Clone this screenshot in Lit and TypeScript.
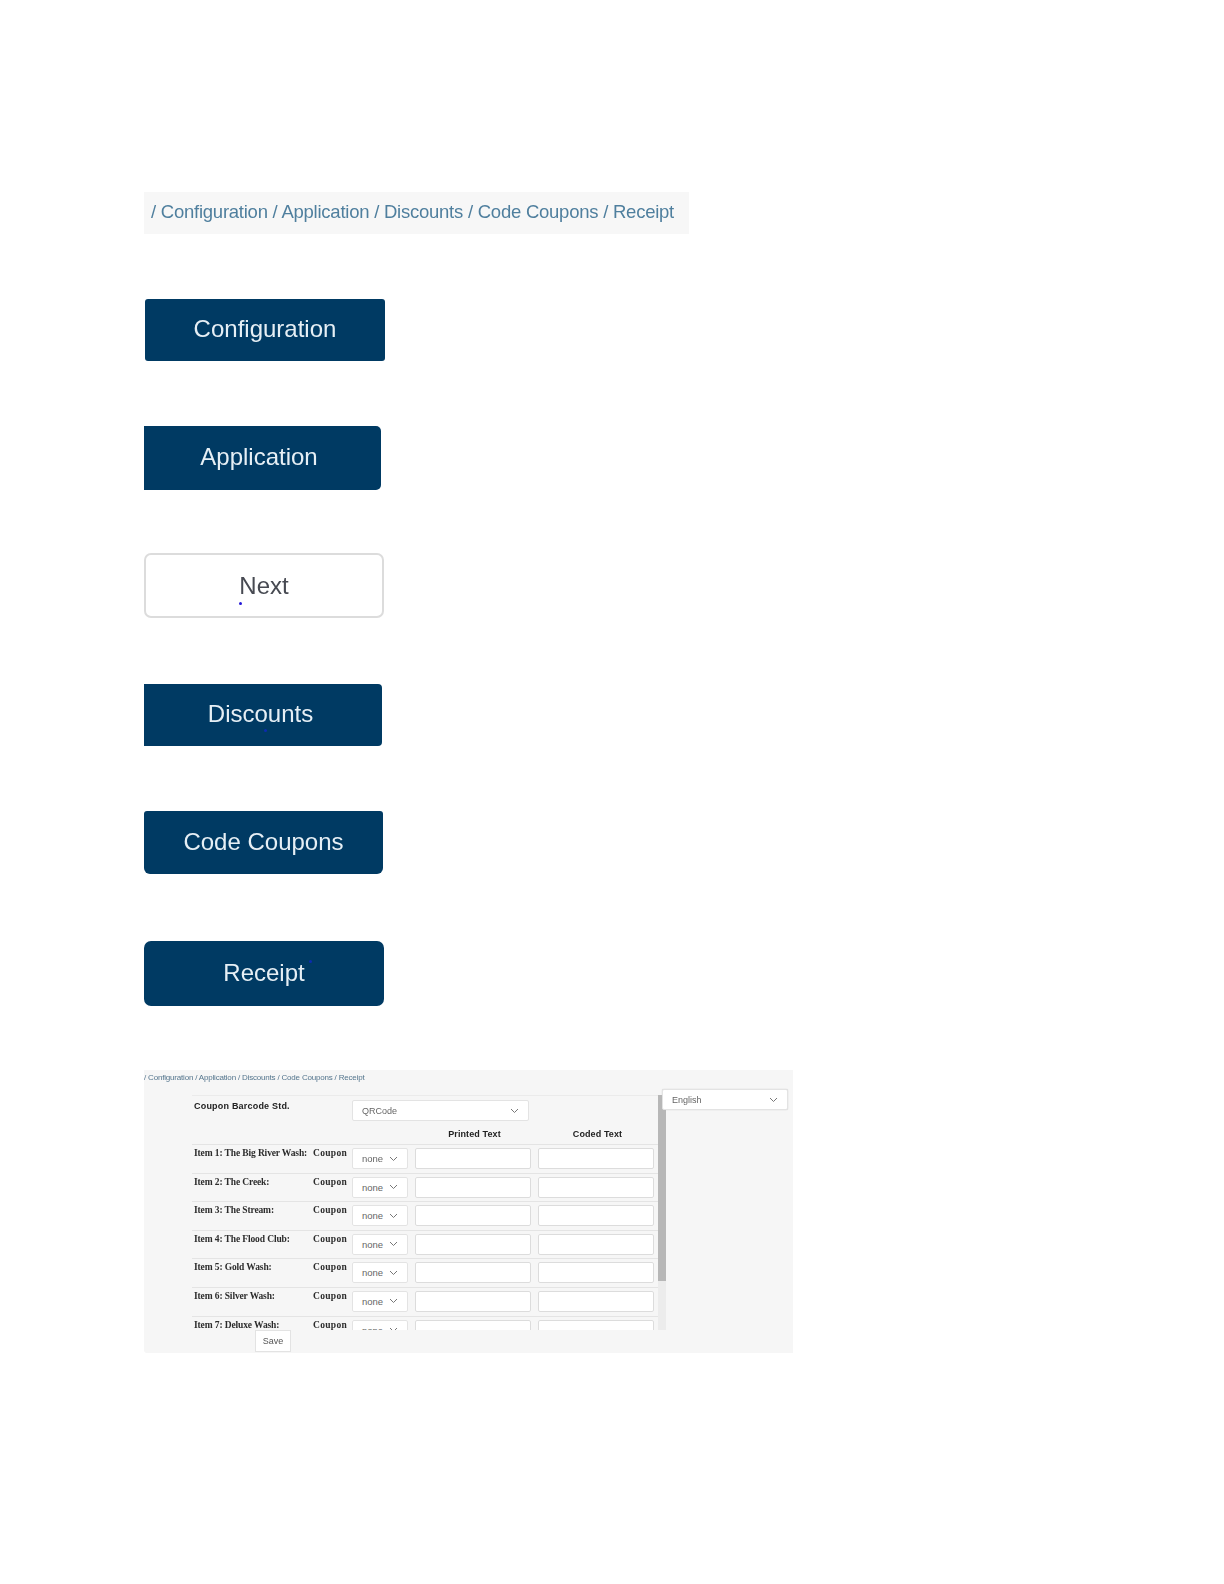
import { LitElement, html, css, svg } from "lit";
import { customElement } from "lit/decorators.js";

const items = [
  "Item 1: The Big River Wash:",
  "Item 2: The Creek:",
  "Item 3: The Stream:",
  "Item 4: The Flood Club:",
  "Item 5: Gold Wash:",
  "Item 6: Silver Wash:",
  "Item 7: Deluxe Wash:",
];

const chevron = svg`<svg class="chev" width="9" height="6" viewBox="0 0 9 6" fill="none" stroke="#777" stroke-width="1"><path d="M1 1l3.5 3.5L8 1"/></svg>`;

@customElement("app-root")
export class AppRoot extends LitElement {
  static styles = css`
    :host {
      display: block;
      box-sizing: border-box;
      height: 1584px;
      padding: 192px 0 0 144px;
      background: #fff;
      font-family: "Liberation Sans", Arial, sans-serif;
    }
    .trail {
      width: 545px;
      height: 42px;
      box-sizing: border-box;
      padding: 0 0 3px 7px;
      display: flex;
      align-items: center;
      background: #f7f7f7;
      color: #4f7f9e;
      font-size: 18.5px;
      letter-spacing: -0.24px;
      white-space: nowrap;
      filter: blur(0.4px);
    }
    .stack {
      display: flex;
      flex-direction: column;
      align-items: flex-start;
    }
    .btn {
      position: relative;
      display: flex;
      align-items: center;
      justify-content: center;
      box-sizing: border-box;
      padding: 0 0 2px;
      border: 0;
      font: 24px "Liberation Sans", Arial, sans-serif;
      background: #003a63;
      color: #e6eff5;
      filter: blur(0.4px);
    }
    .config { width: 240px; height: 62px; margin: 65px 0 0 1px; border-radius: 3px; }
    .app { width: 237px; height: 64px; margin-top: 65px; padding-right: 7px; border-radius: 0 5px 5px 0; }
    .next {
      width: 240px;
      height: 65px;
      margin-top: 63px;
      padding-bottom: 0;
      border-radius: 7px;
      background: #fff;
      color: #474a52;
      border: 2px solid #dcdcdc;
    }
    .disc { width: 238px; height: 62px; margin-top: 66px; padding-right: 5px; border-radius: 0 4px 4px 0; }
    .code { width: 239px; height: 63px; margin-top: 65px; border-radius: 3px 3px 6px 6px; }
    .rcpt { width: 240px; height: 65px; margin-top: 67px; border-radius: 7px; }
    .dot {
      position: absolute;
      width: 3px;
      height: 3px;
      border-radius: 50%;
      background: #2418d8;
    }
    .next .dot { left: 93px; top: 47px; }
    .disc .dot { left: 120px; top: 45px; background: #0b2bb0; }
    .rcpt .dot { left: 165px; top: 19px; background: #0b2bb0; }

    .shot {
      width: 649px;
      height: 283px;
      margin-top: 64px;
      background: #f6f6f6;
      color: #333;
      overflow: hidden;
      border-radius: 0 0 0 3px;
      filter: blur(0.45px);
    }
    .crumbs {
      height: 19px;
      box-sizing: border-box;
      padding-top: 3px;
      font-size: 8px;
      line-height: 9px;
      letter-spacing: -0.19px;
      color: #54758d;
      white-space: nowrap;
    }
    .body {
      display: flex;
      align-items: flex-start;
      padding-left: 48px;
    }
    .form { margin-top: 6px; width: 474px; }
    .pane { display: flex; height: 235px; }
    .scroll {
      width: 466px;
      height: 235px;
      overflow: hidden;
      border-top: 1px solid #ebebeb;
      box-sizing: border-box;
    }
    .grid {
      display: grid;
      grid-template-columns: 153px 56px 116px 116px;
      column-gap: 7px;
    }
    .barcode { height: 32px; padding-top: 4px; box-sizing: border-box; }
    .barcode-label {
      padding: 1px 0 0 2px;
      font-size: 9px;
      font-weight: 700;
      letter-spacing: 0.2px;
      color: #222;
      white-space: nowrap;
    }
    .barcode .sel { grid-column: 2 / span 2; width: 177px; }
    .heads {
      height: 12px;
      margin-bottom: 4px;
      align-items: center;
      font-size: 9px;
      font-weight: 700;
      color: #222;
      letter-spacing: 0.1px;
      text-align: center;
    }
    .heads span { padding-left: 3px; }
    .heads .h1 { grid-column: 3; }
    .row {
      height: 28.6px;
      box-sizing: border-box;
      padding-top: 3px;
      border-top: 1px solid #e4e4e4;
    }
    .label {
      position: relative;
      padding: 0 0 0 2px;
      font: 700 9.5px "Liberation Serif", serif;
      letter-spacing: -0.12px;
      color: #2c2c2c;
      white-space: nowrap;
    }
    .coupon {
      position: absolute;
      left: 121px;
      top: 0;
      letter-spacing: 0.3px;
    }
    .sel {
      display: flex;
      align-items: center;
      justify-content: space-between;
      box-sizing: border-box;
      height: 21px;
      padding: 0 9px 0 9px;
      background: #fff;
      border: 1px solid #e3e3e3;
      border-radius: 2px;
      font-size: 9px;
      color: #666;
    }
    .row .sel { font-size: 9.5px; }
    .row input {
      display: block;
      box-sizing: border-box;
      width: 100%;
      height: 21px;
      padding: 0;
      background: #fff;
      border: 1px solid #dcdcdc;
      border-radius: 2px;
    }
    .bar {
      display: flex;
      flex-direction: column;
      width: 8px;
      height: 235px;
      background: #ececec;
    }
    .thumb { height: 186px; background: #b7b7b7; }
    .save {
      display: block;
      width: 36px;
      height: 22px;
      margin-left: 63px;
      padding: 0;
      box-sizing: border-box;
      background: #fff;
      border: 1px solid #e3e3e3;
      font: 9px "Liberation Sans", Arial, sans-serif;
      color: #555;
    }
    .lang {
      position: relative;
      width: 126px;
      margin-left: -4px;
      box-shadow: 0 0 1px #bbb;
    }
  `;

  render() {
    return html`
      <div class="trail">/ Configuration / Application / Discounts / Code Coupons / Receipt</div>
      <div class="stack">
        <button class="btn config">Configuration</button>
        <button class="btn app">Application</button>
        <button class="btn next">Next<span class="dot"></span></button>
        <button class="btn disc">Discounts<span class="dot"></span></button>
        <button class="btn code">Code Coupons</button>
        <button class="btn rcpt">Receipt<span class="dot"></span></button>
      </div>
      <div class="shot">
        <div class="crumbs">/ Configuration / Application / Discounts / Code Coupons / Receipt</div>
        <div class="body">
          <div class="form">
            <div class="pane">
              <div class="scroll">
                <div class="grid barcode">
                  <div class="barcode-label">Coupon Barcode Std.</div>
                  <div class="sel"><span>QRCode</span>${chevron}</div>
                </div>
                <div class="grid heads">
                  <span class="h1">Printed Text</span>
                  <span>Coded Text</span>
                </div>
                ${items.map(
                  (item) => html`
                    <div class="grid row">
                      <div class="label">${item}<span class="coupon">Coupon</span></div>
                      <div class="sel"><span>none</span>${chevron}</div>
                      <input type="text" />
                      <input type="text" />
                    </div>
                  `
                )}
              </div>
              <div class="bar"><div class="thumb"></div></div>
            </div>
            <button class="save">Save</button>
          </div>
          <div class="sel lang"><span>English</span>${chevron}</div>
        </div>
      </div>
    `;
  }
}
